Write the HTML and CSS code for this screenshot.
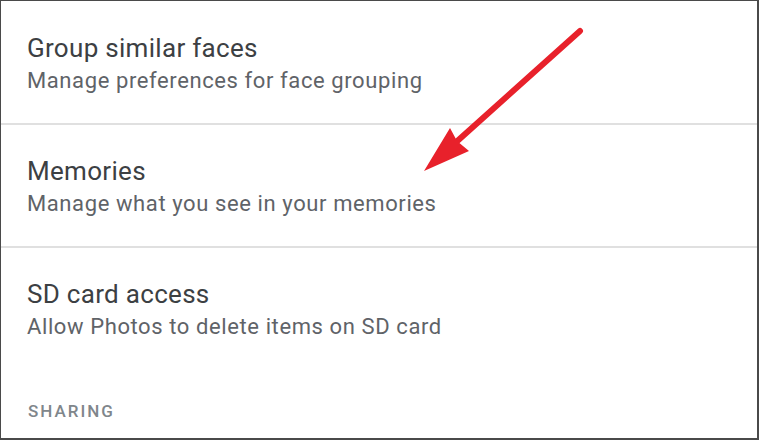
FILE: index.html
```html
<!DOCTYPE html>
<html lang="en">
<head>
    <meta charset="UTF-8">
    <title>Photos settings</title>
    <link rel="stylesheet" href="styles.css">
</head>
<body>
    <div class="frame">
        <div class="setting first">
            <div class="title">Group similar faces</div>
            <div class="subtitle">Manage preferences for face grouping</div>
        </div>
        <div class="setting">
            <div class="title">Memories</div>
            <div class="subtitle">Manage what you see in your memories</div>
        </div>
        <div class="setting last">
            <div class="title">SD card access</div>
            <div class="subtitle">Allow Photos to delete items on SD card</div>
        </div>
        <div class="section-label">SHARING</div>

        <!-- callout arrow -->
        <svg class="arrow" width="759" height="440" viewBox="0 0 759 440">
            <line x1="580" y1="31" x2="454" y2="144" stroke="#e8212b" stroke-width="6" stroke-linecap="round"/>
            <polygon points="424,171 450,128 457,141 469,151" fill="#e8212b"/>
        </svg>
    </div>
</body>
</html>
```

FILE: styles.css
```css
body {
    margin: 0;
    padding: 0;
    background: #fff;
    font-family: Roboto, "Noto Sans", Arial, sans-serif;
}

.frame {
    width: 759px;
    height: 440px;
    box-sizing: border-box;
    border-top: 1px solid #4a4a4a;
    border-left: 1px solid #4a4a4a;
    border-right: 2px solid #4a4a4a;
    border-bottom: 2px solid #4a4a4a;
    position: relative;
    overflow: hidden;
    background: #fff;
}

.setting {
    padding: 30px 26px 26px 26px;
    border-bottom: 2px solid #e0e0e0;
}

.setting.first {
    padding-top: 31px;
}

.setting.last {
    border-bottom: none;
    padding-bottom: 58px;
}

.title {
    font-size: 26px;
    line-height: 32px;
    letter-spacing: 0.3px;
    color: #3c4043;
}

.subtitle {
    font-size: 22px;
    line-height: 33px;
    letter-spacing: 0.6px;
    color: #5f6368;
}

.section-label {
    padding-left: 27px;
    font-size: 17px;
    font-weight: 500;
    letter-spacing: 2px;
    line-height: 20px;
    color: #80868b;
}

.arrow {
    position: absolute;
    left: -1px;
    top: -1px;
    pointer-events: none;
}
```
